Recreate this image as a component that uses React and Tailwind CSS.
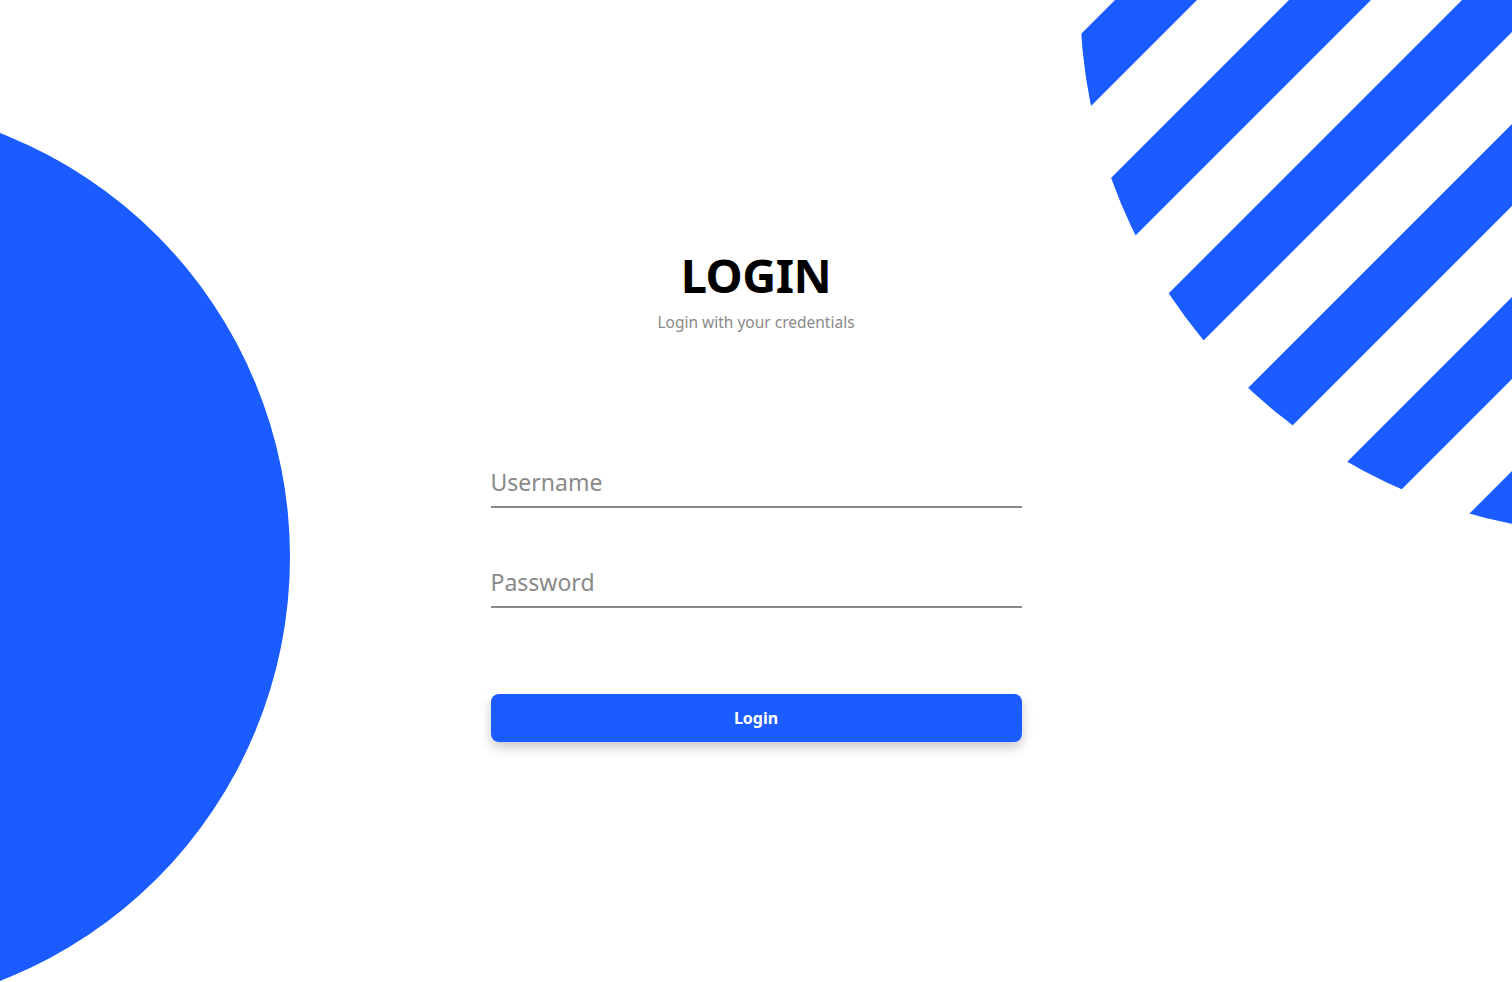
import React from "react";

const BLUE = "#1a5cff";

// stripes on the top-right circle, given as x+y offsets of each band
const stripeStarts = [1115, 1289, 1462, 1636, 1809, 1983, 2156];
const STRIPE_W = 82;

const Backdrop = () => (
    <svg
        className="absolute inset-0 pointer-events-none"
        width="1512"
        height="982"
        viewBox="0 0 1512 982"
    >
        <defs>
            <clipPath id="stripeCircle">
                <circle cx="1616" cy="-2" r="536" />
            </clipPath>
        </defs>
        <circle cx="-165" cy="557" r="455" fill={BLUE} />
        <g clipPath="url(#stripeCircle)" fill={BLUE}>
            {stripeStarts.map((a) => {
                const b = a + STRIPE_W;
                return (
                    <polygon
                        key={a}
                        points={`${a + 600},-600 ${b + 600},-600 ${b - 1200},1200 ${a - 1200},1200`}
                    />
                );
            })}
        </g>
    </svg>
);

const App = () => {
    return (
        <div
            className="relative w-full h-[982px] overflow-hidden bg-white"
            style={{ fontFamily: '"Noto Sans", "Open Sans", sans-serif' }}
        >
            <Backdrop />

            <div className="relative mx-auto w-[531px] pt-[252px] flex flex-col">
                <h1 className="text-center text-[47px] leading-none font-bold text-black tracking-[-0.5px]">
                    LOGIN
                </h1>
                <p className="mt-[16px] text-center text-[15.5px] leading-none text-[#8a8a8a]">
                    Login with your credentials
                </p>

                <form className="mt-[127.5px] flex flex-col" onSubmit={(e) => e.preventDefault()}>
                    <input
                        type="text"
                        placeholder="Username"
                        className="h-[50px] w-full border-b-2 border-[#8a8a8a] bg-transparent text-[23px] text-[#333] placeholder:text-[#8a8a8a] outline-none"
                    />
                    <input
                        type="password"
                        placeholder="Password"
                        className="mt-[50px] h-[50px] w-full border-b-2 border-[#8a8a8a] bg-transparent text-[23px] text-[#333] placeholder:text-[#8a8a8a] outline-none"
                    />
                    <button
                        type="submit"
                        className="mt-[86px] h-[48px] w-full rounded-lg bg-[#1a5cff] text-white text-[16px] font-bold shadow-[0_5px_12px_rgba(0,0,0,0.22)]"
                    >
                        Login
                    </button>
                </form>
            </div>
        </div>
    );
};

export default App;
